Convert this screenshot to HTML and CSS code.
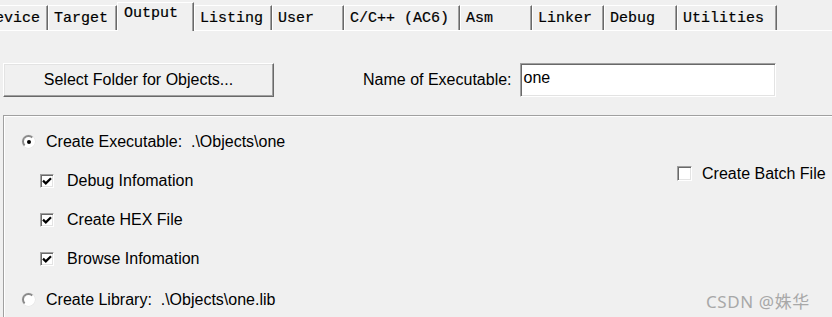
FILE: index.html
```html
<!DOCTYPE html>
<html>
<head>
<meta charset="utf-8">
<link rel="stylesheet" href="styles.css">
</head>
<body>
<div class="page">
  <div class="tabbar">
    <div class="tab">Device</div>
    <div class="tab">Target</div>
    <div class="tab tab-active">Output</div>
    <div class="tab">Listing</div>
    <div class="tab">User</div>
    <div class="tab">C/C++ (AC6)</div>
    <div class="tab">Asm</div>
    <div class="tab">Linker</div>
    <div class="tab">Debug</div>
    <div class="tab">Utilities</div>
  </div>

  <div class="toprow">
    <div class="button">Select Folder for Objects...</div>
    <div class="namefield">
      <span class="label">Name of Executable:</span>
      <div class="input">one</div>
    </div>
  </div>

  <div class="group">
    <div class="options">
      <div class="row">
        <span class="radio radio-on"><span class="dot"></span></span>
        <span class="label pre">Create Executable:  .\Objects\one</span>
      </div>
      <div class="row row-indent">
        <span class="check"><svg viewBox="0 0 10 10" width="10" height="10"><path d="M1 4.6 L3.8 7.4 L9 2.2" fill="none" stroke="#000" stroke-width="2.2"/></svg></span>
        <span class="label">Debug Infomation</span>
      </div>
      <div class="row row-indent">
        <span class="check"><svg viewBox="0 0 10 10" width="10" height="10"><path d="M1 4.6 L3.8 7.4 L9 2.2" fill="none" stroke="#000" stroke-width="2.2"/></svg></span>
        <span class="label">Create HEX File</span>
      </div>
      <div class="row row-indent">
        <span class="check"><svg viewBox="0 0 10 10" width="10" height="10"><path d="M1 4.6 L3.8 7.4 L9 2.2" fill="none" stroke="#000" stroke-width="2.2"/></svg></span>
        <span class="label">Browse Infomation</span>
      </div>
      <div class="row row-last">
        <span class="radio"></span>
        <span class="label pre">Create Library:  .\Objects\one.lib</span>
      </div>
    </div>
    <div class="side">
      <div class="row">
        <span class="check"></span>
        <span class="label">Create Batch File</span>
      </div>
    </div>
  </div>

  <div class="watermark">CSDN @姝华</div>
</div>
</body>
</html>
```

FILE: styles.css
```css
html, body {
  margin: 0;
  padding: 0;
}
body {
  background: #f0f0f0;
  width: 832px;
  height: 317px;
  overflow: hidden;
  font-family: "Liberation Sans", Arial, sans-serif;
  font-size: 16px;
  color: #000;
}
.page {
  position: relative;
  width: 832px;
  height: 317px;
  overflow: hidden;
}

/* tabs */
.tabbar {
  display: grid;
  grid-template-columns: 68px 69px 77px 78px 72px 116px 72px 72px 73px 100px;
  align-items: end;
  margin-left: -20px;
  height: 30px;
  border-bottom: 1px solid #ffffff;
  font-family: "Liberation Mono", "DejaVu Sans Mono", monospace;
  font-size: 15px;
  -webkit-text-stroke: 0.2px #000;
}
.tab {
  box-sizing: border-box;
  height: 25px;
  line-height: 25px;
  padding-left: 5px;
  border-top: 1px solid #ffffff;
  border-left: 1px solid #ffffff;
  border-right: 1px solid #696969;
  box-shadow: inset -1px 0 0 #a0a0a0;
  white-space: pre;
  overflow: hidden;
}
.tab-active {
  position: relative;
  z-index: 1;
  height: 29px;
  margin-bottom: -1px;
  line-height: 22px;
  padding-bottom: 5px;
  padding-left: 6px;
  background: #f0f0f0;
}

/* top row */
.toprow {
  display: flex;
  align-items: center;
  margin-top: 32px;
  padding-left: 3px;
  height: 34px;
}
.button {
  box-sizing: border-box;
  width: 271px;
  height: 34px;
  display: flex;
  align-items: center;
  justify-content: center;
  border-top: 1px solid #ffffff;
  border-left: 1px solid #ffffff;
  border-right: 1px solid #696969;
  border-bottom: 1px solid #696969;
  box-shadow: inset -1px -1px 0 #a0a0a0, inset 1px 1px 0 #e3e3e3;
  padding-bottom: 1px;
}
.namefield {
  display: flex;
  align-items: center;
  margin-left: 89px;
}
.namefield .label {
  margin-right: 8px;
}
.input {
  box-sizing: border-box;
  width: 256px;
  height: 34px;
  background: #ffffff;
  border-top: 1px solid #a0a0a0;
  border-left: 1px solid #a0a0a0;
  border-right: 1px solid #ffffff;
  border-bottom: 1px solid #ffffff;
  box-shadow: inset 1px 1px 0 #696969, inset -1px -1px 0 #e3e3e3;
  padding: 5px 0 0 3px;
  line-height: 18px;
}

/* group box */
.group {
  box-sizing: border-box;
  display: flex;
  margin-top: 18px;
  margin-left: 3px;
  width: 860px;
  height: 240px;
  border-top: 1px solid #a0a0a0;
  border-left: 1px solid #a0a0a0;
  box-shadow: inset 1px 1px 0 #ffffff;
  padding-top: 6px;
}
.options {
  width: 673px;
  display: flex;
  flex-direction: column;
}
.row {
  display: flex;
  align-items: center;
  height: 39px;
}
.options > .row {
  padding-left: 18px;
}
.options > .row-indent {
  padding-left: 36px;
}
.options > .row-last {
  margin-top: 2px;
}
.pre {
  white-space: pre;
}
.radio {
  box-sizing: border-box;
  width: 13px;
  height: 13px;
  border-radius: 50%;
  border: 2px solid;
  border-color: #8a8a8a #ffffff #ffffff #8a8a8a;
  background: #ffffff;
  margin-right: 11px;
  display: flex;
  align-items: center;
  justify-content: center;
  box-shadow: 0 0 0 0.5px #e3e3e3;
}
.radio .dot {
  width: 4px;
  height: 4px;
  border-radius: 50%;
  background: #000;
}
.check {
  box-sizing: border-box;
  width: 14px;
  height: 14px;
  background: #ffffff;
  border-top: 1px solid #a0a0a0;
  border-left: 1px solid #a0a0a0;
  border-right: 1px solid #ffffff;
  border-bottom: 1px solid #ffffff;
  box-shadow: inset 1px 1px 0 #696969, inset -1px -1px 0 #e3e3e3;
  display: flex;
  align-items: center;
  justify-content: center;
  margin-right: 13px;
}
.check svg {
  display: block;
}
.side {
  padding-top: 32px;
}
.side .check {
  width: 15px;
  height: 15px;
  margin-right: 10px;
}

.watermark {
  position: absolute;
  left: 706px;
  top: 288px;
  font-family: "Noto Sans", "Noto Sans CJK SC", sans-serif;
  font-size: 17px;
  color: #a8a8a8;
  letter-spacing: 0.6px;
}
```
